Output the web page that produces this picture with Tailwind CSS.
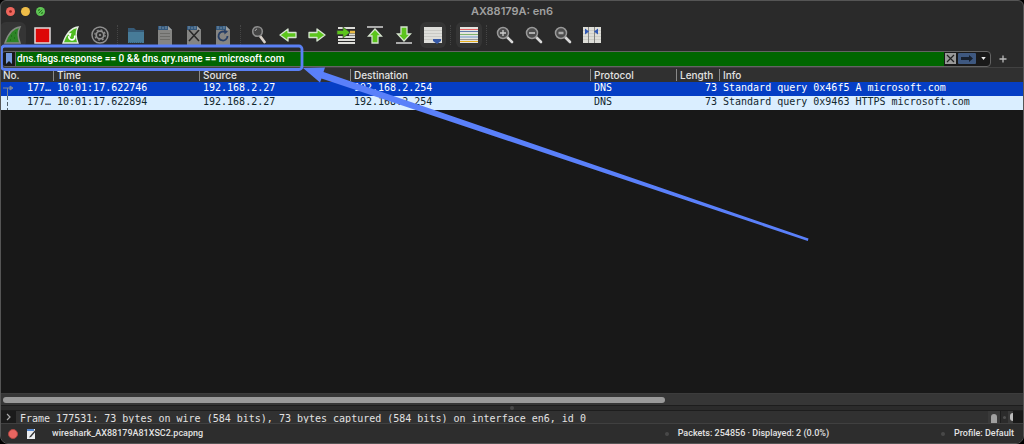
<!DOCTYPE html>
<html lang="en">
<head>
<meta charset="utf-8">
<title>AX88179A: en6</title>
<script src="https://cdn.jsdelivr.net/npm/@tailwindcss/browser@4"></script>
</head>
<body class="bg-black">
<svg class="hidden">
  <defs>
    <symbol id="page" viewBox="0 0 22 22">
      <path d="M4 2h10l4 4v15H4z" fill="#858583"/>
      <path d="M4 2h10l4 4H4z" fill="#34587c"/>
      <path d="M6 2v3M9 3v2M12 2v3" stroke="#7893a8"/>
      <path d="M14 2v4h4z" fill="#a0a09e"/>
    </symbol>
    <symbol id="arrow" viewBox="0 0 22 22">
      <path d="M3 8.500h8V5l8 6-8 6v-3.500H3z" fill="#5cc51c" stroke="#d6e4cf" stroke-width="1.300" stroke-linejoin="round"/>
    </symbol>
    <symbol id="lens" viewBox="0 0 22 22">
      <path d="M13 13l5 5" stroke="#d8d8d8" stroke-width="2.600" stroke-linecap="round"/>
      <circle cx="9" cy="9" r="5.500" fill="#4c4c4c" stroke="#999" stroke-width="1.500"/>
    </symbol>
  </defs>
</svg>
<div class="relative flex min-h-screen flex-col overflow-hidden rounded-b-lg rounded-t-md border border-[#555] bg-[#2a2a2a] font-['Inter',sans-serif] text-[10px] text-[#e2e2e2]">
  <header class="relative flex h-5 shrink-0 items-center justify-center">
    <div class="absolute left-1 flex gap-[6px] pl-px">
      <button aria-label="Close" class="block size-[9px]"><svg viewBox="0 0 10 10" class="size-full"><circle cx="5" cy="5" r="5" fill="#ee665c"/><circle cx="5" cy="5" r="1.500" fill="#8e1e19"/></svg></button>
      <button aria-label="Minimize" class="block size-[9px] rounded-full bg-[#efbd48]"></button>
      <button aria-label="Zoom window" class="block size-[9px]"><svg viewBox="0 0 10 10" class="size-full"><circle cx="5" cy="5" r="5" fill="#5fc454"/><path d="M3 4.500V3h1.500M7 5.500V7H5.500M3 7l4-4" stroke="#216b1b" fill="none"/></svg></button>
    </div>
    <h1 class="text-[11px] font-semibold text-[#a0a0a0]">AX88179A: en6</h1>
  </header>

  <div role="toolbar" aria-label="Main toolbar" class="flex h-[29px] shrink-0 items-center gap-[7px] pb-1 pl-px pt-[3px]">
    <button aria-label="Start capture" class="size-[22px] shrink-0 rounded-sm bg-[#353535] ring-2 ring-[#353535]"><svg viewBox="0 0 22 22"><path d="M3 19C6 10 10 4 18 3c-3 6-2 11 0 16z" fill="#2c8426" stroke="#858a83" stroke-width="1.500"/><path d="M9 12h1M13 9h1M12 14h1M8 16h1" stroke="#15580f" stroke-width="1.200"/></svg></button>
    <button aria-label="Stop capture" class="size-[22px] shrink-0"><svg viewBox="0 0 22 22"><path d="M4 4h15v15H4z" fill="#dd0808" stroke="#e0dada" stroke-width="1.500"/></svg></button>
    <button aria-label="Restart capture" class="size-[22px] shrink-0"><svg viewBox="0 0 22 22"><path d="M3 19C6 10 10 4 18 3c-3 6-2 11 0 16z" fill="#4fbd20" stroke="#e4ece1" stroke-width="1.300"/><path d="M9 12a3 3 0 1 0 5.500-.500" fill="none" stroke="#fff" stroke-width="1.700"/><path d="M7.500 9.500l4-.500-1 4z" fill="#fff"/></svg></button>
    <button aria-label="Capture options" class="size-[22px] shrink-0"><svg viewBox="0 0 22 22" fill="none" stroke="#909090"><circle cx="11" cy="11" r="8" stroke-width="1.500"/><circle cx="11" cy="11" r="3.800" stroke-width="1.800"/><circle cx="11" cy="11" r="5.200" stroke-width="1.200" stroke-dasharray="2 2.080"/><circle cx="11" cy="11" r=".8" fill="#909090"/></svg></button>
    <span class="-ml-px h-5 w-px border-l border-dotted border-[#454545]"></span>
    <button aria-label="Open file" class="size-[22px] shrink-0"><svg viewBox="0 0 22 22"><path d="M3 4h6l2 2h8v12H3z" fill="#365b78"/><path d="M3 8h16v11H3z" fill="#477b98"/><path d="M4 18.500h14" stroke="#33617c" stroke-dasharray="1 1"/></svg></button>
    <button aria-label="Save file" class="size-[22px] shrink-0"><svg viewBox="0 0 22 22"><use href="#page"/><path d="M6 9.500h10M6 12.500h10M6 15.500h10" stroke="#6c6c69"/></svg></button>
    <button aria-label="Close file" class="size-[22px] shrink-0"><svg viewBox="0 0 22 22"><use href="#page"/><path d="M6 6l10 11M16 6L6 17" stroke="#292929" stroke-width="1.600"/></svg></button>
    <button aria-label="Reload file" class="size-[22px] shrink-0"><svg viewBox="0 0 22 22"><use href="#page"/><path d="M13 8a4.500 4.500 0 1 0 2.500 4" fill="none" stroke="#263e65" stroke-width="1.800"/><path d="M12 5.500l4 2-3.500 3z" fill="#263e65"/></svg></button>
    <span class="-ml-px h-5 w-px border-l border-dotted border-[#454545]"></span>
    <button aria-label="Find packet" class="size-[22px] shrink-0"><svg viewBox="0 0 22 22"><path d="M12 12l4.500 6" stroke="#d8d0c8" stroke-width="2.800" stroke-linecap="round"/><circle cx="9.500" cy="7.500" r="4.800" fill="#444" stroke="#8c8c8c" stroke-width="1.600"/><path d="M7 7a3 3 0 0 1 2-2" stroke="#aaa" fill="none"/></svg></button>
    <button aria-label="Previous packet" class="size-[22px] shrink-0"><svg viewBox="0 0 22 22"><use href="#arrow" transform="matrix(-1 0 0 1 22 0)"/></svg></button>
    <button aria-label="Next packet" class="size-[22px] shrink-0"><svg viewBox="0 0 22 22"><use href="#arrow"/></svg></button>
    <button aria-label="Go to packet" class="size-[22px] shrink-0"><svg viewBox="0 0 22 22"><path d="M3 4h17M3 13h17M3 16h17M3 19h17M14 10.500h6" stroke="#dcdcd8" stroke-width="2"/><path d="M15 8h5" stroke="#e8ba45" stroke-width="2.500"/><path d="M2 6.500h6V3l7 5.500L8 14v-3.500H2z" fill="#5cc51c" stroke="#3b4c32" stroke-width=".7"/></svg></button>
    <button aria-label="First packet" class="size-[22px] shrink-0"><svg viewBox="0 0 22 22"><path d="M3 3h16" stroke="#d6d6d6" stroke-width="1.500"/><path d="M11 5l6.500 7H14v7H8v-7H4.500z" fill="#5cc51c" stroke="#d6e4cf" stroke-width="1.300"/></svg></button>
    <button aria-label="Last packet" class="size-[22px] shrink-0"><svg viewBox="0 0 22 22"><path d="M3 19h16" stroke="#d6d6d6" stroke-width="1.500"/><path d="M11 17L4.500 10H8V3h6v7h3.500z" fill="#5cc51c" stroke="#d6e4cf" stroke-width="1.300"/></svg></button>
    <button aria-label="Auto scroll" class="size-[22px] shrink-0 rounded-sm bg-[#353535] ring-2 ring-[#353535]"><svg viewBox="0 0 22 22"><path d="M2 3h18v16H2z" fill="#dededa"/><path d="M2 6.500h18M2 9.500h18M2 12.500h18M2 15.500h18" stroke="#c9c9c5"/><path d="M11 15h8v2l-4 3-4-3z" fill="#3558a5"/></svg></button>
    <span class="-ml-px h-5 w-px border-l border-dotted border-[#454545]"></span>
    <button aria-label="Colorize packets" class="size-[22px] shrink-0 rounded-sm bg-[#353535] ring-2 ring-[#353535]"><svg viewBox="0 0 22 22" shape-rendering="crispEdges"><path d="M2 3h18v16H2z" fill="#e4e4e0"/><path d="M2 5h18v1H2z" fill="#e46262"/><path d="M2 7h18v1H2z" fill="#607bac"/><path d="M2 10h18v1H2z" fill="#80b56f"/><path d="M2 12h18v2H2z" fill="#a8bed6"/><path d="M2 15h18v1H2z" fill="#999"/><path d="M2 17h18v1H2z" fill="#e7b020"/></svg></button>
    <span class="-ml-px h-5 w-px border-l border-dotted border-[#454545]"></span>
    <button aria-label="Zoom in" class="size-[22px] shrink-0"><svg viewBox="0 0 22 22"><use href="#lens"/><path d="M6 9h6M9 6v6" stroke="#ccc" stroke-width="1.300"/></svg></button>
    <button aria-label="Zoom out" class="size-[22px] shrink-0"><svg viewBox="0 0 22 22"><use href="#lens"/><path d="M6 9h6" stroke="#ccc" stroke-width="1.300"/></svg></button>
    <button aria-label="Normal size" class="size-[22px] shrink-0"><svg viewBox="0 0 22 22"><use href="#lens"/><path d="M6.500 9h5" stroke="#aaa" stroke-width="2.500"/></svg></button>
    <button aria-label="Resize columns" class="size-[22px] shrink-0"><svg viewBox="0 0 22 22"><path d="M2 3h18v16H2z" fill="#deded8"/><path d="M2 6.500h18M2 9.500h18M2 12.500h18M2 15.500h18" stroke="#ccccc6"/><path d="M7.500 3v16M13.500 3v16" stroke="#858582"/><path d="M4 4.500l4 3-4 3zM17 4.500l-4 3 4 3z" fill="#3058b4"/></svg></button>
  </div>

  <form class="flex h-[18px] shrink-0 items-center border-b border-[#414141] pr-4" aria-label="Display filter">
    <div class="flex h-4 min-w-0 flex-1 items-center rounded-sm border border-[#646464] bg-[#191919]">
      <button type="button" aria-label="Filter bookmarks" class="flex h-full w-[14px] shrink-0 items-center justify-center border-r border-[#646464]"><svg viewBox="0 0 8 12" class="h-3 w-2"><path d="M1 0h6v11L4 8l-3 3z" fill="#7599dc"/></svg></button>
      <input aria-label="Filter expression" value="dns.flags.response == 0 &amp;&amp; dns.qry.name == microsoft.com" class="h-full min-w-0 flex-1 bg-[#006600] pl-px font-['Roboto',sans-serif] text-[10px] font-medium text-white outline-none">
      <button type="button" aria-label="Clear filter" class="ml-px size-[11px]"><svg viewBox="0 0 11 11"><path d="M0 0h11v11H0z" fill="#999"/><path d="M2 2l7 7M9 2L2 9" stroke="#222" stroke-width="1.200"/></svg></button>
      <button type="button" aria-label="Apply filter" class="ml-[2px] h-[11px] w-[18px]"><svg viewBox="0 0 18 11"><rect width="18" height="11" rx="1" fill="#3e5880"/><path d="M3 4h8V2l4 3.500L11 9V7H3z" fill="#17202e"/></svg></button>
      <button type="button" aria-label="Filter history" class="flex h-full w-[14px] items-center justify-center"><svg viewBox="0 0 6 4" class="h-[3px] w-[5px]"><path d="M0 0h6L3 4z" fill="#eee"/></svg></button>
    </div>
    <button type="button" aria-label="Add filter button" class="ml-2 size-2"><svg viewBox="0 0 8 8"><path d="M4 .500v7M.500 4h7" stroke="#bbb" stroke-width="1.300"/></svg></button>
  </form>

  <main class="flex flex-1 flex-col bg-[#181818]">
    <table class="w-full table-fixed border-collapse font-['DejaVu_Sans_Mono',monospace] text-[10px] leading-3 whitespace-nowrap">
      <colgroup><col class="w-[52px]"><col class="w-[146px]"><col class="w-[151px]"><col class="w-[240px]"><col class="w-[86px]"><col class="w-[43px]"><col></colgroup>
      <thead class="bg-[#303030] text-left font-['Inter',sans-serif] leading-[14px] [&_th]:p-0 [&_th]:font-medium">
        <tr class="h-[14px]">
          <th><span class="pl-[2px]">No.</span></th>
          <th><span class="border-l border-[#888] pl-[3px]">Time</span></th>
          <th><span class="border-l border-[#888] pl-[3px]">Source</span></th>
          <th><span class="border-l border-[#888] pl-[3px]">Destination</span></th>
          <th><span class="border-l border-[#888] pl-[3px]">Protocol</span></th>
          <th><span class="border-l border-[#888] pl-[3px]">Length</span></th>
          <th><span class="border-l border-[#888] pl-[3px]">Info</span></th>
        </tr>
      </thead>
      <tbody class="[&_td]:py-0 [&_td]:pl-1 [&_td]:pr-0 [&_td]:align-top">
        <tr class="h-[14px] bg-[#053ec5] text-white">
          <td><div class="flex h-[13px] justify-between"><svg viewBox="0 0 14 14" class="-ml-1 h-[14px] w-[14px]" fill="none" stroke="#7c8794"><path d="M2 6h7M6.500 6v8"/><path d="M9 4l3 2-3 2z" fill="#7c8794"/></svg><span class="pr-[2px]">177…</span></div></td>
          <td>10:01:17.622746</td><td>192.168.2.27</td><td>192.168.2.254</td><td>DNS</td><td class="text-right"><span class="pr-[2px]">73</span></td><td>Standard query 0x46f5 A microsoft.com</td>
        </tr>
        <tr class="h-[14px] bg-[#daeeff] text-[#12272e]">
          <td><div class="flex h-[13px] justify-between"><svg viewBox="0 0 14 14" class="-ml-1 h-[14px] w-[14px]"><path d="M6.500 0v14" stroke="#52616c" stroke-dasharray="4 2"/></svg><span class="pr-[2px]">177…</span></div></td>
          <td>10:01:17.622894</td><td>192.168.2.27</td><td>192.168.2.254</td><td>DNS</td><td class="text-right"><span class="pr-[2px]">73</span></td><td>Standard query 0x9463 HTTPS microsoft.com</td>
        </tr>
      </tbody>
    </table>
  </main>

  <div class="h-3 shrink-0 border-t border-[#3c3c3c] bg-[#363636] px-[2px] pt-[3px]"><div class="h-[6px] w-[65%] rounded-full bg-[#9a9a9a]"></div></div>
  <div class="flex h-[6px] shrink-0 items-center justify-center border-y border-[#1d1d1d] bg-[#2b2b2b]"><span class="size-1 rounded-full bg-[#484848]"></span></div>
  <section aria-label="Packet details" class="flex h-3 shrink-0 overflow-hidden bg-[#313131] font-['DejaVu_Sans_Mono',monospace] text-[10px] leading-[15px]">
    <button aria-label="Expand frame" class="flex h-full w-[15px] items-center justify-center bg-[#1b1b1b]"><svg viewBox="0 0 6 8" class="h-2 w-[6px]"><path d="M1 1l3 3-3 3" fill="none" stroke="#aaa" stroke-width="1.200"/></svg></button>
    <span class="flex-1 whitespace-nowrap pl-1">Frame 177531: 73 bytes on wire (584 bits), 73 bytes captured (584 bits) on interface en6, id 0</span>
    <span class="flex w-3 justify-center bg-[#393939] pt-[3px]"><span class="h-3 w-[6px] rounded-t-full bg-[#a0a0a0]"></span></span>
    <span class="flex w-2 items-center justify-center border-l border-[#1d1d1d] bg-[#2b2b2b]"><span class="size-[3px] rounded-full bg-[#505050]"></span></span>
    <span class="flex w-[5px] items-center justify-end bg-[#393939]"><span class="h-2 w-[3px] rounded-l-full bg-[#bbb]"></span></span>
    <span class="w-[10px] bg-[#181818]"></span>
  </section>
  <footer class="flex h-5 shrink-0 items-center border-t border-[#404040] bg-[#2d2d2d] pl-[7px] pr-[9px] font-['Roboto',sans-serif] text-[9px] font-medium">
    <button aria-label="Expert information" class="size-[10px] rounded-full border border-[#ae4743] bg-[#ea6661]"></button>
    <button aria-label="Capture comment" class="ml-2 size-3"><svg viewBox="0 0 12 12"><path d="M1 1h8v10H1z" fill="#eceef0"/><path d="M1 1h7v2H1z" fill="#5688d0"/><path d="M4 8l6-7 1 1-6 7-2 .500z" fill="#333"/></svg></button>
    <span class="ml-[14px] flex-1">wireshark_AX88179A81XSC2.pcapng</span>
    <span class="mr-[9px] size-1 rounded-full bg-[#484848]"></span>
    <span>Packets: 254856 · Displayed: 2 (0.0%)</span>
    <span class="ml-28 mr-[9px] size-1 rounded-full bg-[#484848]"></span>
    <span>Profile: Default</span>
  </footer>

  <svg class="pointer-events-none absolute -left-px -top-px" width="820" height="250" viewBox="0 0 820 250">
    <rect x="1.500" y="46" width="300.500" height="23.500" rx="3" fill="none" stroke="#5a80f4" stroke-width="2.800"/>
    <path d="M303 68l22-.500-1.500 4.500L808.500 238.500l-.700 2.500L321.500 78.500l-1.500 4z" fill="#5a80fa"/>
  </svg>
</div>
</body>
</html>
